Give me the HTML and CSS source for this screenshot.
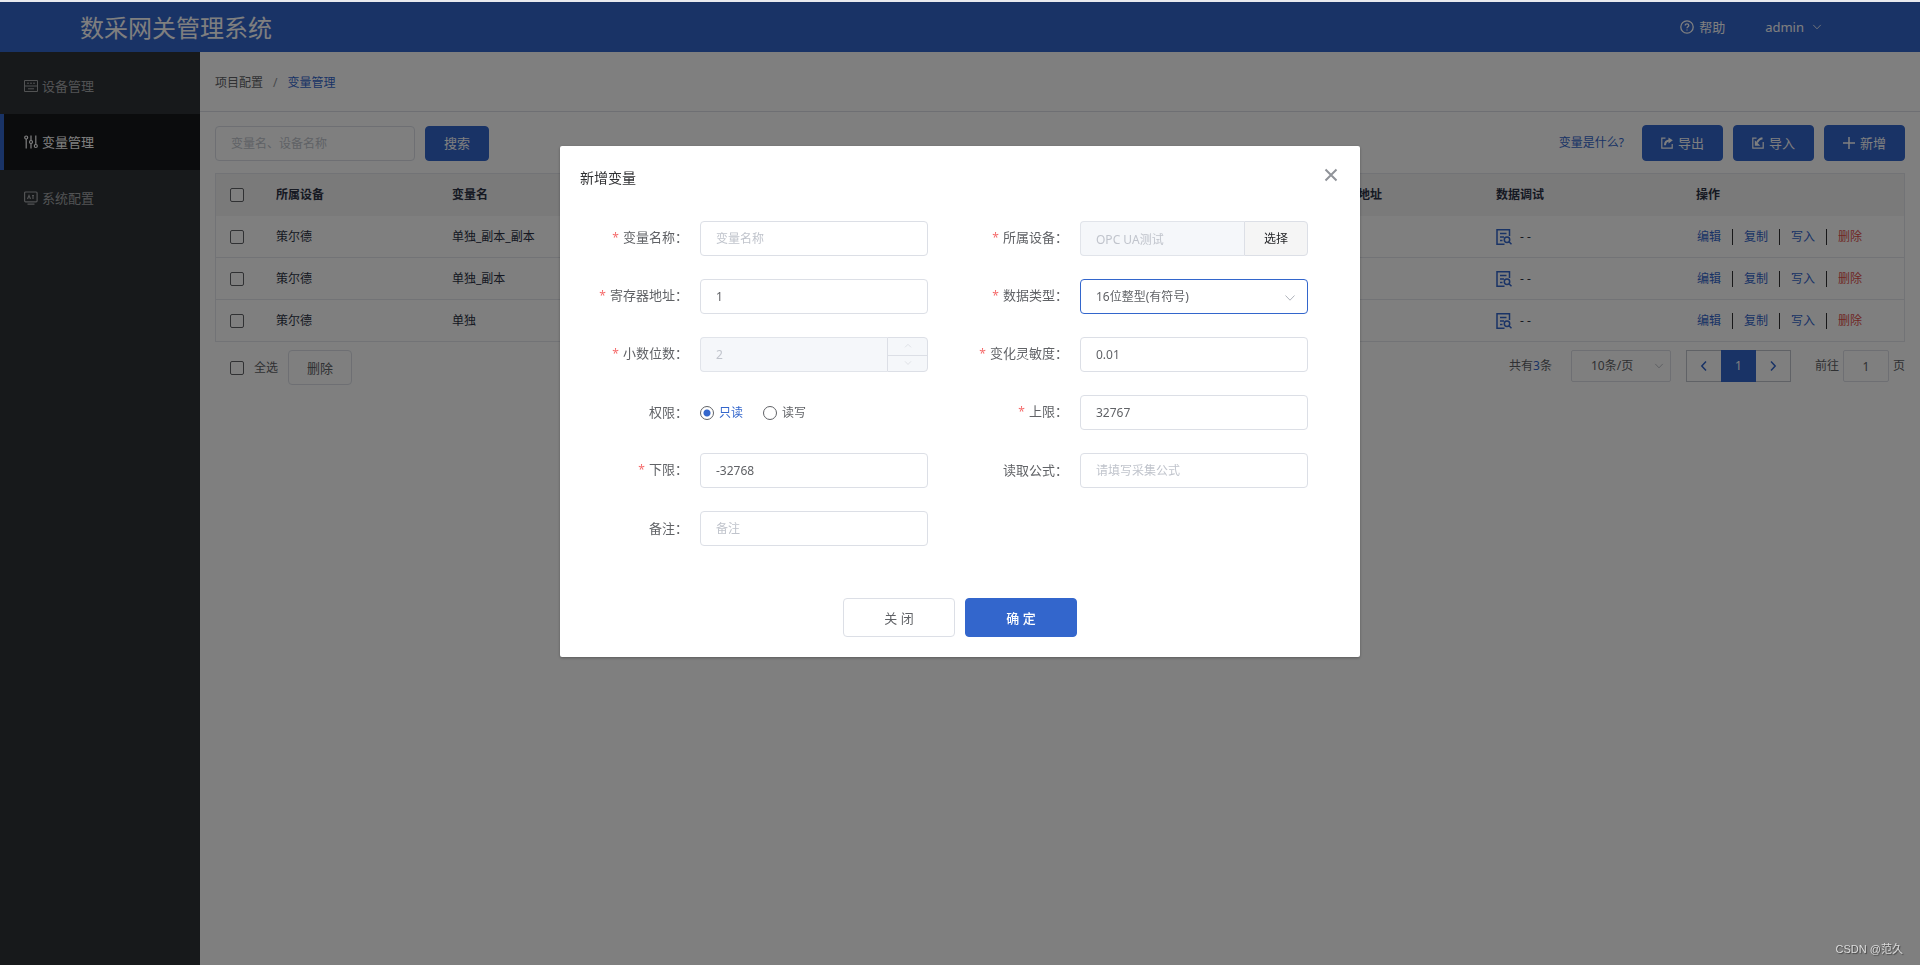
FILE: index.html
```html
<!DOCTYPE html>
<html lang="zh-CN">
<head>
<meta charset="utf-8">
<title>数采网关管理系统</title>
<link rel="stylesheet" href="styles.css">
</head>
<body>
<svg class="sprite" aria-hidden="true">
  <symbol id="i-down" viewBox="0 0 12 12"><path d="M1.500 3.500 6 8.200l4.500-4.700" fill="none" stroke="currentColor"/></symbol>
  <symbol id="i-debug" viewBox="0 0 16 16"><g fill="none" stroke="currentColor" stroke-width="1.500"><path d="M13.500 7V.8H1v14.400h7.500M4 4.500h6.500M4 8h4M4 11.500h2.500"/><circle cx="11" cy="10.800" r="2.700"/><path d="m13 12.800 2.500 2.500"/></g></symbol>
</svg>

<div class="page">
  <header class="topbar">
    <h1 class="brand">数采网关管理系统</h1>
    <a class="help" href="#"><svg class="i14" viewBox="0 0 14 14" fill="none" stroke="currentColor" stroke-width="1.300"><circle cx="7" cy="7" r="6.200"/><path d="M5.200 5.600c0-2.300 3.600-2.200 3.600-.1C8.800 6.800 7 6.800 7 8.300M7 9.400v1.200"/></svg>帮助</a>
    <button class="user" type="button">admin<svg class="i10"><use href="#i-down"/></svg></button>
  </header>
  <div class="body">
    <nav class="side">
      <a class="side-item" href="#"><svg class="i14" viewBox="0 0 14 14" fill="none" stroke="currentColor"><path d="M.5 1.500h13v11H.5zM.5 7h13M3 4.200h2M6 4.200h2M9 4.200h2M4 9.800h6"/></svg>设备管理</a>
      <a class="side-item active" href="#"><svg class="i14" viewBox="0 0 14 14" fill="none" stroke="currentColor" stroke-width="1.200"><circle cx="2.200" cy="2.500" r="1.500"/><path d="M2.200 4v9.500M7 .5v5M7 8.500v5M11.800.5v9"/><circle cx="7" cy="7" r="1.500"/><circle cx="11.800" cy="11" r="1.500"/></svg>变量管理</a>
      <a class="side-item" href="#"><svg class="i14" viewBox="0 0 14 14" fill="none" stroke="currentColor" stroke-width="1.200"><rect x=".6" y="1" width="12.500" height="9.800" rx="1"/><path d="M3.500 13.200h7M3.500 8l1.500-3.500L6.500 8M8 4.500h2M9 4.500V8"/></svg>系统配置</a>
    </nav>
    <main class="main">
      <div class="crumbs"><a href="#">项目配置</a><span class="slash">/</span><a class="here" href="#">变量管理</a></div>
      <div class="content">
        <div class="tools">
          <input class="field search" type="text" aria-label="搜索" placeholder="变量名、设备名称">
          <button class="btn primary" type="button">搜索</button>
          <a class="what" href="#">变量是什么?</a>
          <button class="btn primary tall" type="button"><svg class="i12" viewBox="0 0 12 12" fill="none" stroke="currentColor" stroke-width="1.200"><path d="M4.500 1.200H.8v10h10.400V7"/><path d="M4 8.200c0-3 1.500-4.500 4.500-4.700" stroke-width="2"/><path d="M7.500.5v6L11.800 3.300z" fill="currentColor" stroke="none"/></svg>导出</button>
          <button class="btn primary tall" type="button"><svg class="i12" viewBox="0 0 12 12" fill="none" stroke="currentColor" stroke-width="1.200"><path d="M4.500 1.200H.8v10h10.400V5"/><path d="M10.500 1.200c-3 .5-4.500 2-5.500 4.500" stroke-width="2"/><path d="M2.800 3.300v5.500h5.500z" fill="currentColor" stroke="none"/></svg>导入</button>
          <button class="btn primary tall" type="button"><svg class="i12" viewBox="0 0 12 12" fill="none" stroke="currentColor" stroke-width="1.500"><path d="M6 0v12M0 6h12"/></svg>新增</button>
        </div>
        <table class="grid">
          <colgroup><col class="c-check"><col class="c-device"><col><col class="c-addr"><col class="c-debug"><col class="c-ops"></colgroup>
          <thead><tr><th class="pick"><input type="checkbox" aria-label="选择全部"></th><th>所属设备</th><th>变量名</th><th>寄存器地址</th><th>数据调试</th><th>操作</th></tr></thead>
          <tbody>
            <tr><td class="pick"><input type="checkbox" aria-label="选择"></td><td>策尔德</td><td>单独_副本_副本</td><td></td><td><span class="debug"><svg class="i16"><use href="#i-debug"/></svg>- -</span></td><td><div class="ops"><a href="#">编辑</a><a href="#">复制</a><a href="#">写入</a><a class="del" href="#">删除</a></div></td></tr>
            <tr><td class="pick"><input type="checkbox" aria-label="选择"></td><td>策尔德</td><td>单独_副本</td><td></td><td><span class="debug"><svg class="i16"><use href="#i-debug"/></svg>- -</span></td><td><div class="ops"><a href="#">编辑</a><a href="#">复制</a><a href="#">写入</a><a class="del" href="#">删除</a></div></td></tr>
            <tr><td class="pick"><input type="checkbox" aria-label="选择"></td><td>策尔德</td><td>单独</td><td></td><td><span class="debug"><svg class="i16"><use href="#i-debug"/></svg>- -</span></td><td><div class="ops"><a href="#">编辑</a><a href="#">复制</a><a href="#">写入</a><a class="del" href="#">删除</a></div></td></tr>
          </tbody>
        </table>
        <div class="foot">
          <label class="all"><input type="checkbox">全选</label>
          <button class="btn" type="button">删除</button>
          <div class="paging">
            <span>共有<b>3</b>条</span>
            <span class="select size"><select aria-label="每页条数"><option>10条/页</option></select><svg class="i10"><use href="#i-down"/></svg></span>
            <div class="pager">
              <button type="button" aria-label="上一页"><svg class="i12" viewBox="0 0 12 12" fill="none" stroke="currentColor" stroke-width="1.500"><path d="M8 1.500 3.800 6 8 10.500"/></svg></button>
              <button class="on" type="button">1</button>
              <button type="button" aria-label="下一页"><svg class="i12" viewBox="0 0 12 12" fill="none" stroke="currentColor" stroke-width="1.500"><path d="M4 1.500 8.200 6 4 10.500"/></svg></button>
            </div>
            <label class="jump">前往<input type="text" value="1">页</label>
          </div>
        </div>
      </div>
    </main>
  </div>
</div>

<div class="mask">
  <section class="dialog" role="dialog" aria-modal="true" aria-labelledby="dlg-title">
    <header class="dialog-head">
      <h2 id="dlg-title">新增变量</h2>
      <button class="close" type="button" aria-label="关闭对话框"><svg class="i14" viewBox="0 0 14 14" fill="none" stroke="currentColor" stroke-width="2"><path d="m1.500 1.500 11 11M12.500 1.500l-11 11"/></svg></button>
    </header>
    <form class="form">
      <div class="row"><label class="need" for="f-name">变量名称：</label><input class="field" id="f-name" type="text" placeholder="变量名称"></div>
      <div class="row"><label class="need" for="f-dev">所属设备：</label><div class="group"><input class="field" id="f-dev" type="text" value="OPC UA测试" disabled><button type="button">选择</button></div></div>
      <div class="row"><label class="need" for="f-addr">寄存器地址：</label><input class="field" id="f-addr" type="text" value="1"></div>
      <div class="row"><label class="need" for="f-type">数据类型：</label><span class="select focus"><select id="f-type"><option>16位整型(有符号)</option></select><svg class="i12"><use href="#i-down"/></svg></span></div>
      <div class="row"><label class="need" for="f-dec">小数位数：</label><div class="group"><input class="field" id="f-dec" type="text" value="2" disabled><div class="steps"><button type="button" aria-label="增加" disabled><svg class="i8" viewBox="0 0 12 12"><path d="M1.500 8 6 3.500 10.500 8" fill="none" stroke="currentColor"/></svg></button><button type="button" aria-label="减少" disabled><svg class="i8"><use href="#i-down"/></svg></button></div></div></div>
      <div class="row"><label class="need" for="f-sens">变化灵敏度：</label><input class="field" id="f-sens" type="text" value="0.01"></div>
      <div class="row" role="radiogroup" aria-labelledby="f-auth"><span class="label" id="f-auth">权限：</span><div class="radios"><label><input type="radio" name="auth" checked><span>只读</span></label><label><input type="radio" name="auth"><span>读写</span></label></div></div>
      <div class="row"><label class="need" for="f-max">上限：</label><input class="field" id="f-max" type="text" value="32767"></div>
      <div class="row"><label class="need" for="f-min">下限：</label><input class="field" id="f-min" type="text" value="-32768"></div>
      <div class="row"><label for="f-calc">读取公式：</label><input class="field" id="f-calc" type="text" placeholder="请填写采集公式"></div>
      <div class="row"><label for="f-note">备注：</label><input class="field" id="f-note" type="text" placeholder="备注"></div>
    </form>
    <footer class="dialog-foot">
      <button class="btn" type="button">关 闭</button>
      <button class="btn primary strong" type="button">确 定</button>
    </footer>
  </section>
</div>
<div class="mark">CSDN @范久</div>
</body>
</html>
```
FILE: styles.css
```css
* { box-sizing: border-box; }
body {
  margin: 0;
  border-top: 2px solid #e8eaee;
  background: #fff;
  color: #606266;
  font: 12px/18px "Noto Sans", "Noto Sans CJK SC", sans-serif;
}
button, input, select { margin: 0; font: inherit; color: inherit; }
button { padding: 0; border: 0; background: none; }
a { color: inherit; text-decoration: none; }
h1, h2 { margin: 0; font-weight: 400; }
svg { flex: none; }
.sprite { position: absolute; width: 0; height: 0; }
.i8 { width: 8px; height: 8px; }
.i10 { width: 10px; height: 10px; }
.i12 { width: 12px; height: 12px; }
.i14 { width: 14px; height: 14px; }
.i16 { width: 16px; height: 16px; }

.page { display: flex; flex-direction: column; min-height: calc(100vh - 2px); }
.topbar {
  display: flex;
  align-items: center;
  height: 50px;
  padding: 0 98px 0 80px;
  background: #3366cc;
  color: #fff;
  font-size: 13px;
}
.brand { margin-right: auto; padding-top: 2px; font-size: 24px; line-height: 36px; }
.help { display: flex; align-items: center; gap: 5px; }
.user { display: flex; align-items: center; gap: 8px; margin-left: 40px; }
.body { display: flex; flex: 1; }

.side { flex: none; width: 200px; padding-top: 6px; background: #2e3236; color: #a4a6a9; font-size: 13px; }
.side-item {
  display: flex;
  align-items: center;
  gap: 4px;
  height: 56px;
  padding-left: 20px;
  border-left: 4px solid transparent;
}
.side-item.active { border-color: #3366cc; background: #17181a; color: #fff; }

.main { flex: 1; min-width: 0; }
.crumbs { display: flex; align-items: center; gap: 10px; height: 60px; padding: 2px 15px 0; border-bottom: 1px solid #dcdfe6; }
.slash { color: #909399; }
.here { color: #3366cc; }
.content { padding: 13px 15px; }

.field {
  width: 100%;
  min-width: 0;
  height: 35px;
  padding: 0 15px;
  border: 1px solid #dcdfe6;
  border-radius: 4px;
  background: #fff;
  outline: 0;
}
.field::placeholder { color: #c0c4cc; opacity: 1; }
.field:disabled { background: #f5f7fa; color: #c0c4cc; border-color: #e1e4ea; }
.btn {
  display: flex;
  align-items: center;
  justify-content: center;
  gap: 5px;
  height: 35px;
  padding: 0 18px;
  border: 1px solid #dcdfe6;
  border-radius: 4px;
  font-size: 13px;
}
.primary { border-color: #3366cc; background: #3366cc; color: #fff; }
.tall { height: 36px; }
.tools { display: flex; align-items: center; gap: 10px; }
.tools .search { width: 200px; }
.what { margin: 0 8px 0 auto; color: #3366cc; }

input[type="checkbox"], input[type="radio"] {
  display: block;
  flex: none;
  width: 14px;
  height: 14px;
  appearance: none;
  border: 1px solid #606266;
  border-radius: 2px;
  background: #fff;
}
input[type="radio"] { border-radius: 50%; }
input[type="radio"]:checked { background: radial-gradient(circle, #3366cc 3px, #fff 4px); }

.grid {
  width: 100%;
  margin-top: 12px;
  border: 1px solid #e4e7ed;
  border-spacing: 0;
  border-bottom: 0;
  table-layout: fixed;
  color: #2c3245;
}
.c-check { width: 50px; }
.c-device { width: 176px; }
.c-addr { width: 174px; }
.c-debug { width: 200px; }
.c-ops { width: 218px; }
.grid th, .grid td { height: 42px; padding: 0 10px; text-align: left; white-space: nowrap; }
.grid th { background: #f4f4f5; font-weight: 700; }
.grid td { border-bottom: 1px solid #e4e7ed; }
.grid .pick { padding-left: 14px; }
.debug { display: flex; align-items: center; gap: 8px; }
.debug svg { color: #3366cc; }
.ops { display: flex; color: #3366cc; line-height: 16px; }
.ops a { padding: 0 11px; border-left: 1px solid #303133; }
.ops a:first-child { padding-left: 1px; border-left: 0; }
.ops .del { color: #e0504a; }

.foot { display: flex; align-items: flex-start; margin-top: 8px; }
.all { display: flex; align-items: center; gap: 10px; height: 35px; padding: 0 10px 0 15px; }
.paging { display: flex; align-items: center; margin-left: auto; }
.paging b { color: #3366cc; font-weight: 400; }
.select {
  position: relative;
  display: block;
  width: 100%;
  height: 35px;
  border: 1px solid #dcdfe6;
  border-radius: 4px;
}
.select select { width: 100%; height: 100%; padding: 0 30px 0 15px; appearance: none; border: 0; outline: 0; background: transparent; }
.select svg { position: absolute; top: 50%; right: 11px; margin-top: -5px; color: #b0b4bc; pointer-events: none; }
.select.focus { border-color: #3366cc; }
.select.size { width: 100px; height: 32px; margin: 0 15px 0 19px; border-radius: 2px; }
.size select { padding: 0 20px 0 19px; }
.select.size svg { right: 6px; }
.pager { display: flex; border: 1px solid #c0c4cc; }
.pager button { display: flex; align-items: center; justify-content: center; width: 34px; height: 30px; color: #3366cc; }
.pager .on { width: 35px; height: 32px; margin: -1px 0; background: #3366cc; color: #fff; }
.jump { display: flex; align-items: center; gap: 4px; margin-left: 24px; }
.jump input { width: 46px; height: 32px; border: 1px solid #dcdfe6; border-radius: 2px; background: #fff; text-align: center; }

.mask {
  position: fixed;
  inset: 2px 0 0;
  padding-top: 144px;
  overflow: auto;
  background: rgba(0, 0, 0, 0.5);
}
.dialog {
  width: 800px;
  max-width: 100%;
  margin: 0 auto;
  padding: 20px;
  border-radius: 2px;
  background: #fff;
  box-shadow: 0 1px 3px rgba(0, 0, 0, 0.3);
}
.dialog-head { display: flex; justify-content: space-between; height: 24px; padding-right: 2px; }
.dialog-head h2 { color: #303133; font-size: 14px; line-height: 24px; }
.close { display: flex; align-items: center; height: 18px; color: #909399; }
.form { display: grid; grid-template-columns: repeat(2, 1fr); row-gap: 23px; padding: 31px 0 52px; }
.row { display: flex; align-items: center; height: 35px; padding-right: 32px; }
.row > label, .label {
  flex: none;
  width: 120px;
  padding: 0 12px 2px 0;
  font-size: 13px;
  text-align: right;
  white-space: nowrap;
}
.need::before { content: "*"; margin-right: 4px; color: #f56c6c; font-size: 12px; }
.group { display: flex; flex: 1; min-width: 0; }
.group .field { flex: 1; border-radius: 4px 0 0 4px; border-right: 0; }
.group > button { width: 64px; border: 1px solid #dcdfe6; border-radius: 0 4px 4px 0; background: #f5f5f5; color: #1f2023; }
.steps { display: grid; grid-template-rows: 1fr 1fr; width: 41px; border: 1px solid #dcdfe6; border-radius: 0 4px 4px 0; background: #f5f7fa; color: #d3d6dc; }
.steps button { display: flex; align-items: center; justify-content: center; }
.steps button + button { border-top: 1px solid #dcdfe6; }
.radios { display: flex; gap: 20px; }
.radios label { display: flex; align-items: center; gap: 5px; }
.radios input:checked + span { color: #3366cc; }
.dialog-foot { display: flex; justify-content: center; gap: 10px; }
.dialog-foot .btn { width: 112px; height: 39px; }
.strong { font-weight: 500; }

.mark {
  position: fixed;
  right: 17px;
  bottom: 8px;
  color: #dcdcdc;
  font: 11px/16px "Liberation Sans", "Noto Sans CJK SC", sans-serif;
  text-shadow: 1px 1px 1px #444;
}
```
